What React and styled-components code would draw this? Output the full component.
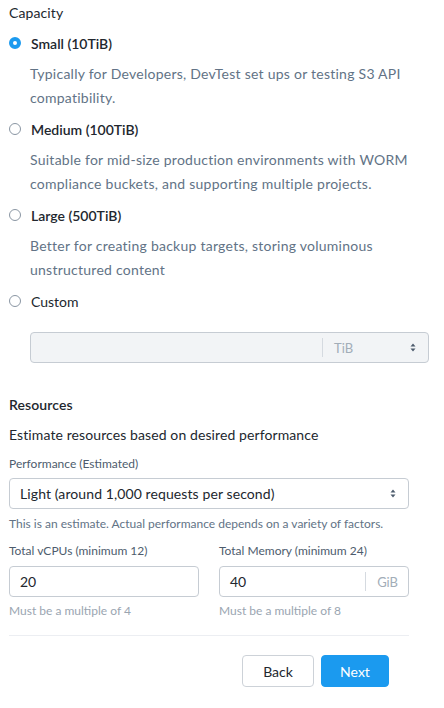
import React, { useState } from "react";
import styled, { createGlobalStyle } from "styled-components";

const Global = createGlobalStyle`
  body {
    margin: 0;
    background: #fff;
    font-family: Lato, "Open Sans", sans-serif;
    color: #22272e;
  }
`;

const Wrap = styled.div`
  width: 420px;
  padding-left: 9px;
`;

const Title = styled.div`
  font-size: 14px;
  line-height: 26px;
  letter-spacing: 0.1px;
  font-weight: ${(p) => (p.strong ? 600 : 400)};
  margin-bottom: ${(p) => p.mb || 0}px;
`;

const Option = styled.div`
  display: flex;
  flex-direction: column;
`;

const RadioRow = styled.label`
  display: flex;
  align-items: center;
  height: 24px;
  gap: 10px;
  font-size: 14px;
  font-weight: ${(p) => (p.plain ? 400 : 600)};
  color: #22272e;
  cursor: pointer;
`;

const RadioDot = styled.span`
  box-sizing: border-box;
  width: 12px;
  height: 12px;
  border-radius: 50%;
  border: ${(p) => (p.checked ? "4px solid #1b9aef" : "1px solid #8a96a3")};
  background: #fff;
  flex: none;
`;

const Desc = styled.div`
  padding-left: 21px;
  margin: 7px 0;
  font-size: 14px;
  line-height: 24px;
  letter-spacing: 0.25px;
  color: #627386;
`;

const UnitBox = styled.div`
  box-sizing: border-box;
  display: flex;
  align-items: center;
  height: 31px;
  width: ${(p) => p.w || "100%"};
  margin-left: ${(p) => p.ml || 0}px;
  margin-top: ${(p) => p.mt || 0}px;
  border: 1px solid #c6ccd3;
  border-radius: 4px;
  background: ${(p) => (p.disabled ? "#f2f4f6" : "#fff")};
`;

const BoxText = styled.div`
  flex: 1;
  padding-left: 10px;
  font-size: 14px;
  color: #22272e;
`;

const Sep = styled.span`
  width: 1px;
  height: 19px;
  background: #d5dae0;
`;

const Unit = styled.span`
  font-size: 13px;
  color: #a2adb8;
  padding: 0 ${(p) => p.pr || 10}px 0 11px;
  width: ${(p) => p.w || "auto"};
`;

const Arrows = () => (
  <svg width="6" height="9" viewBox="0 0 6 9" style={{ flex: "none" }}>
    <path d="M3 0.5 L5.5 3.5 H0.5 Z M3 8.5 L0.5 5.5 H5.5 Z" fill="#4d5c6d" />
  </svg>
);

const Resources = styled.div`
  width: 400px;
  margin-top: 29px;
`;

const Small = styled.div`
  font-size: 12px;
  line-height: 18px;
  color: ${(p) => p.color || "#4d5c6d"};
  margin-top: ${(p) => p.mt || 0}px;
`;

const Select = styled.div`
  box-sizing: border-box;
  display: flex;
  align-items: center;
  justify-content: space-between;
  height: 31px;
  margin-top: 5px;
  padding: 0 12px 0 10px;
  border: 1px solid #c6ccd3;
  border-radius: 4px;
  font-size: 14px;
  letter-spacing: 0.1px;
`;

const Grid = styled.div`
  display: grid;
  grid-template-columns: 190px 190px;
  column-gap: 20px;
  margin-top: 9px;
`;

const Field = styled.div`
  display: flex;
  flex-direction: column;
`;

const Divider = styled.div`
  height: 1px;
  background: #eceef2;
  margin-top: 15px;
`;

const Footer = styled.div`
  display: flex;
  justify-content: flex-end;
  gap: 7px;
  padding-right: 20px;
  margin-top: 19px;
`;

const Button = styled.button`
  box-sizing: border-box;
  height: 32px;
  width: ${(p) => p.w}px;
  border-radius: 4px;
  font-family: inherit;
  font-size: 14px;
  border: 1px solid ${(p) => (p.primary ? "#1b9aef" : "#cdd2d8")};
  background: ${(p) => (p.primary ? "#1b9aef" : "#fff")};
  color: ${(p) => (p.primary ? "#fff" : "#22272e")};
`;

const options = [
  {
    id: "small",
    label: "Small (10TiB)",
    desc: "Typically for Developers, DevTest set ups or testing S3 API compatibility.",
  },
  {
    id: "medium",
    label: "Medium (100TiB)",
    desc: "Suitable for mid-size production environments with WORM compliance buckets, and supporting multiple projects.",
  },
  {
    id: "large",
    label: "Large (500TiB)",
    desc: "Better for creating backup targets, storing voluminous unstructured content",
  },
  { id: "custom", label: "Custom" },
];

export default function App() {
  const [size, setSize] = useState("small");
  return (
    <Wrap>
      <Global />
      <Title mb={5}>Capacity</Title>
      {options.map((o) => (
        <Option key={o.id}>
          <RadioRow plain={!o.desc} onClick={() => setSize(o.id)}>
            <RadioDot checked={size === o.id} />
            <span>{o.label}</span>
          </RadioRow>
          {o.desc && <Desc>{o.desc}</Desc>}
        </Option>
      ))}
      <UnitBox disabled ml={21} mt={19} w="399px">
        <BoxText />
        <Sep />
        <Unit w="66px">TiB</Unit>
        <Arrows />
        <span style={{ width: 12 }} />
      </UnitBox>
      <Resources>
        <Title strong mb={4}>Resources</Title>
        <Title>Estimate resources based on desired performance</Title>
        <Small mt={7}>Performance (Estimated)</Small>
        <Select>
          <span>Light (around 1,000 requests per second)</span>
          <Arrows />
        </Select>
        <Small mt={6} color="#627386">
          This is an estimate. Actual performance depends on a variety of factors.
        </Small>
        <Grid>
          <Field>
            <Small>Total vCPUs (minimum 12)</Small>
            <UnitBox mt={6}>
              <BoxText>20</BoxText>
            </UnitBox>
            <Small mt={5} color="#9aa5b1">Must be a multiple of 4</Small>
          </Field>
          <Field>
            <Small>Total Memory (minimum 24)</Small>
            <UnitBox mt={6}>
              <BoxText>40</BoxText>
              <Sep />
              <Unit pr={10}>GiB</Unit>
            </UnitBox>
            <Small mt={5} color="#9aa5b1">Must be a multiple of 8</Small>
          </Field>
        </Grid>
        <Divider />
        <Footer>
          <Button w={72}>Back</Button>
          <Button primary w={68}>Next</Button>
        </Footer>
      </Resources>
    </Wrap>
  );
}
